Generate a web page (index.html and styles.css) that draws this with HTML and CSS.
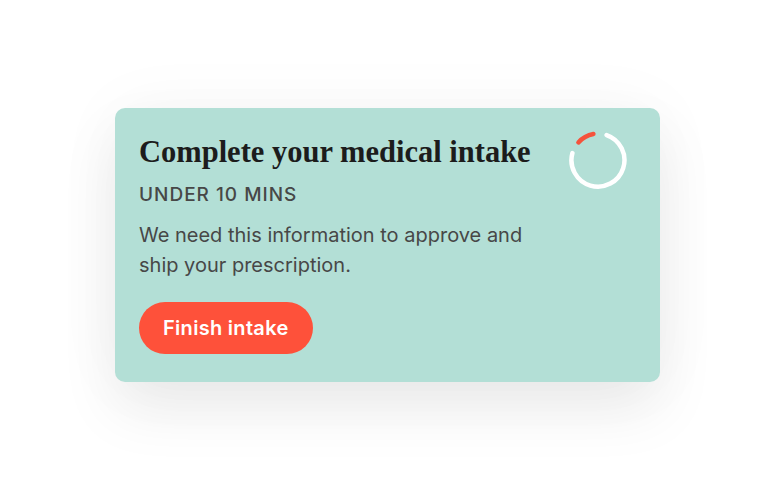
FILE: index.html
```html
<!DOCTYPE html>
<html lang="en">
<head>
<meta charset="UTF-8">
<title>Medical intake</title>
<link rel="stylesheet" href="styles.css">
</head>
<body>
<div class="page">
	<div class="card">
		<div class="card-text">
			<h2 class="title">Complete your medical intake</h2>
			<p class="time">UNDER 10 MINS</p>
			<p class="desc">We need this information to approve and ship your prescription.</p>
			<a class="btn" href="#">Finish intake</a>
		</div>
		<svg class="ring" width="60" height="60" viewBox="0 0 60 60">
			<!-- white track -->
			<path d="M38.6 5.1 A26.5 26.5 0 1 1 4.4 23.1" fill="none" stroke="#fff" stroke-width="4.5" stroke-linecap="round"/>
			<!-- progress -->
			<path d="M10.4 12.4 A26.5 26.5 0 0 1 25.4 4" fill="none" stroke="#f5533c" stroke-width="4.5" stroke-linecap="round"/>
		</svg>
	</div>
</div>
</body>
</html>
```

FILE: styles.css
```css
*{ margin:0; padding:0; box-sizing:border-box; }
html, body{ background:#fff; }
body{
	font-family:"Inter", "Liberation Sans", sans-serif;
}
.page{
	min-height:490px;
	padding:108px 0 0 115px;
}
.card{
	width:545px;
	height:274px;
	background:#b3dfd6;
	border-radius:10px;
	padding:26px 24px 0 24px;
	display:flex;
	justify-content:space-between;
	box-shadow:0 28px 60px rgba(0,0,0,0.075), 0 0 70px rgba(0,0,0,0.04);
}
.title{
	font-family:"Liberation Serif", serif;
	font-weight:bold;
	font-size:30.5px;
	line-height:36px;
	color:#1c1c1c;
}
.time{
	margin-top:13px;
	font-size:19px;
	font-weight:500;
	line-height:24px;
	letter-spacing:1px;
	color:#474747;
}
.desc{
	margin-top:13px;
	width:400px;
	font-size:20px;
	line-height:30px;
	color:#474747;
}
.btn{
	display:inline-block;
	margin-top:22px;
	height:52px;
	line-height:52px;
	padding:0 24px;
	border-radius:26px;
	background:#fe513a;
	color:#fff;
	font-size:20px;
	font-weight:600;
	letter-spacing:0.3px;
	text-decoration:none;
}
.ring{
	margin-top:-4px;
	margin-right:8px;
}
```
